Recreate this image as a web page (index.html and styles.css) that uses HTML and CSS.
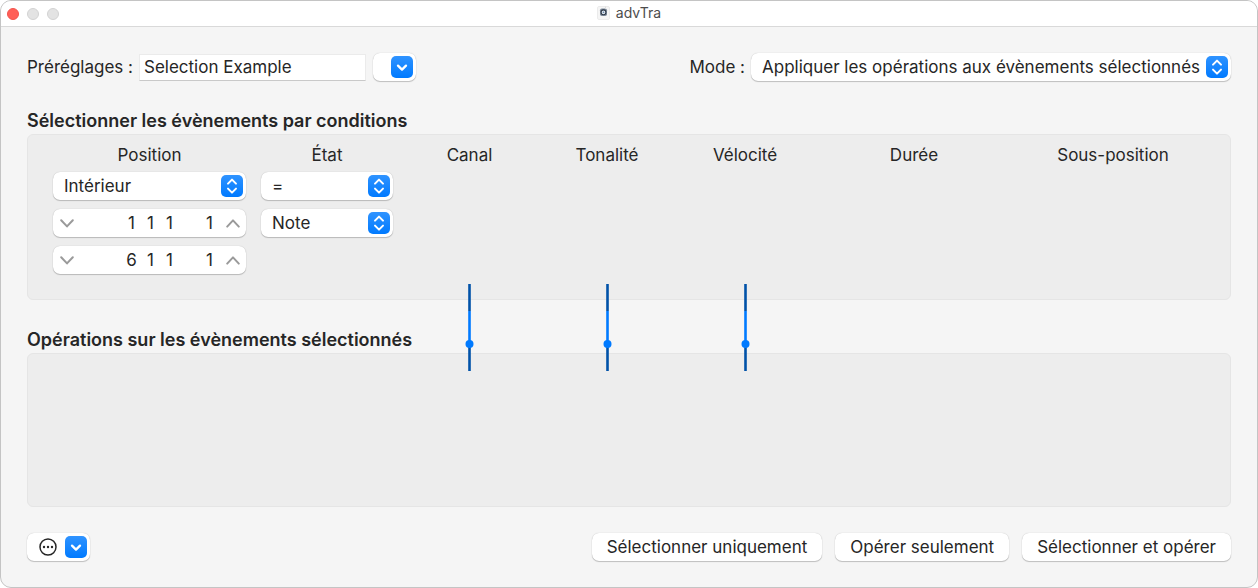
FILE: index.html
```html
<!DOCTYPE html>
<html lang="fr">
<head>
    <meta charset="UTF-8">
    <meta name="viewport" content="width=device-width, initial-scale=1.0">
    <title>advTra</title>
    <link rel="stylesheet" href="styles.css">
</head>
<body>
    <svg width="0" height="0" class="symbols" aria-hidden="true">
        <linearGradient id="blue" x1="0" y1="0" x2="0" y2="1">
            <stop offset="0" stop-color="#2f93ff"/>
            <stop offset="1" stop-color="#007aff"/>
        </linearGradient>
        <symbol id="updown" viewBox="0 0 22 22">
            <rect width="22" height="22" rx="5" fill="url(#blue)"/>
            <path d="M7 8.6l4-4 4 4M7 13.6l4 4 4-4" fill="none" stroke="#fff" stroke-width="2" stroke-linecap="round" stroke-linejoin="round"/>
        </symbol>
        <symbol id="down" viewBox="0 0 22 22">
            <rect width="22" height="22" rx="5" fill="url(#blue)"/>
            <path d="M7 9.6l4 4 4-4" fill="none" stroke="#fff" stroke-width="2.3" stroke-linecap="round" stroke-linejoin="round"/>
        </symbol>
        <symbol id="step-down" viewBox="0 0 14 9">
            <path d="M1.2 1.2L7 7.4l5.8-6.2" fill="none" stroke="#9a9a9a" stroke-width="2" stroke-linecap="round" stroke-linejoin="round"/>
        </symbol>
        <symbol id="step-up" viewBox="0 0 14 9">
            <path d="M1.2 7.6L7 1.4l5.8 6.2" fill="none" stroke="#9a9a9a" stroke-width="2" stroke-linecap="round" stroke-linejoin="round"/>
        </symbol>
        <symbol id="callout" viewBox="0 0 9 87">
            <path d="M4.5 0v27M4.5 60v27" stroke="#0052a8" stroke-width="2.6"/>
            <path d="M4.5 27v33" stroke="#007aff" stroke-width="2.6"/>
            <circle cx="4.5" cy="60" r="4" fill="#007aff"/>
        </symbol>
    </svg>

    <div class="window">
        <header class="titlebar">
            <div class="lights">
                <span class="light close"></span>
                <span class="light"></span>
                <span class="light"></span>
            </div>
            <div class="title">
                <svg width="13" height="14" viewBox="0 0 13 14" aria-hidden="true">
                    <rect x="0.5" y="0.5" width="12" height="13" rx="1.5" fill="#f5f5f5" stroke="#ebebeb"/>
                    <rect x="3" y="2.5" width="7" height="7.5" rx="1.8" fill="#7f8b9b"/>
                    <circle cx="6.5" cy="6.3" r="2.4" fill="#dde5ee" stroke="#303b4a" stroke-width="1.1"/>
                    <circle cx="6.5" cy="6.3" r="0.8" fill="#5d7ea3"/>
                    <path d="M8.5 0.5v2.5" stroke="#dcdcdc"/>
                </svg>
                <span>advTra</span>
            </div>
        </header>

        <main class="content">
            <div class="toolbar">
                <label for="preset">Préréglages :</label>
                <input type="text" id="preset" class="preset-name" value="Selection Example">
                <div class="popup preset-menu">
                    <select aria-label="Menu des préréglages"><option></option></select>
                    <svg class="badge" aria-hidden="true"><use href="#down"/></svg>
                </div>
                <label for="mode" class="mode-label">Mode :</label>
                <div class="popup mode-menu">
                    <select id="mode"><option>Appliquer les opérations aux évènements sélectionnés</option></select>
                    <svg class="badge" aria-hidden="true"><use href="#updown"/></svg>
                </div>
            </div>

            <h2>Sélectionner les évènements par conditions</h2>
            <section class="panel conditions">
                <div class="columns">
                    <div class="column">
                        <h3>Position</h3>
                        <div class="popup">
                            <select aria-label="Position"><option>Intérieur</option></select>
                            <svg class="badge" aria-hidden="true"><use href="#updown"/></svg>
                        </div>
                        <div class="stepper">
                            <button type="button" aria-label="Diminuer"><svg width="14" height="9"><use href="#step-down"/></svg></button>
                            <div class="digits">
                                <input type="text" value="1" aria-label="Début, mesure">
                                <input type="text" value="1" aria-label="Début, temps">
                                <input type="text" value="1" aria-label="Début, division">
                                <input type="text" value="1" aria-label="Début, tic" class="tick">
                            </div>
                            <button type="button" aria-label="Augmenter"><svg width="14" height="9"><use href="#step-up"/></svg></button>
                        </div>
                        <div class="stepper">
                            <button type="button" aria-label="Diminuer"><svg width="14" height="9"><use href="#step-down"/></svg></button>
                            <div class="digits">
                                <input type="text" value="6" aria-label="Fin, mesure">
                                <input type="text" value="1" aria-label="Fin, temps">
                                <input type="text" value="1" aria-label="Fin, division">
                                <input type="text" value="1" aria-label="Fin, tic" class="tick">
                            </div>
                            <button type="button" aria-label="Augmenter"><svg width="14" height="9"><use href="#step-up"/></svg></button>
                        </div>
                    </div>
                    <div class="column">
                        <h3>État</h3>
                        <div class="popup">
                            <select aria-label="Condition d’état"><option>=</option></select>
                            <svg class="badge" aria-hidden="true"><use href="#updown"/></svg>
                        </div>
                        <div class="popup">
                            <select aria-label="Type d’évènement"><option>Note</option></select>
                            <svg class="badge" aria-hidden="true"><use href="#updown"/></svg>
                        </div>
                    </div>
                    <div class="column"><h3>Canal</h3></div>
                    <div class="column"><h3>Tonalité</h3></div>
                    <div class="column"><h3>Vélocité</h3></div>
                    <div class="column"><h3>Durée</h3></div>
                    <div class="column"><h3>Sous-position</h3></div>
                </div>
                <!-- lines from the three middle columns down to the operations -->
                <div class="columns callouts" aria-hidden="true">
                    <svg class="callout canal"><use href="#callout"/></svg>
                    <svg class="callout"><use href="#callout"/></svg>
                    <svg class="callout"><use href="#callout"/></svg>
                </div>
            </section>

            <h2>Opérations sur les évènements sélectionnés</h2>
            <section class="panel operations"></section>

            <footer class="actions">
                <button type="button" class="push more" aria-label="Autres actions">
                    <svg width="18" height="18" viewBox="0 0 18 18" aria-hidden="true">
                        <circle cx="9" cy="9" r="8" fill="none" stroke="#262626" stroke-width="1.5"/>
                        <circle cx="5" cy="9" r="1.2" fill="#262626"/>
                        <circle cx="9" cy="9" r="1.2" fill="#262626"/>
                        <circle cx="13" cy="9" r="1.2" fill="#262626"/>
                    </svg>
                    <svg width="22" height="22" aria-hidden="true"><use href="#down"/></svg>
                </button>
                <button type="button" class="push">Sélectionner uniquement</button>
                <button type="button" class="push">Opérer seulement</button>
                <button type="button" class="push">Sélectionner et opérer</button>
            </footer>
        </main>
    </div>
</body>
</html>
```
FILE: styles.css
```css
* {
    box-sizing: border-box;
}

body {
    margin: 0;
    background-color: #fff;
    color: #262626;
    font-family: Inter, "Liberation Sans", sans-serif;
    font-size: 17px;
    line-height: 24px;
}

input, select, button {
    font: inherit;
    color: inherit;
    margin: 0;
    padding: 0;
    border: 0;
    background: none;
}

.symbols {
    position: absolute;
}

.window {
    display: flex;
    flex-direction: column;
    min-height: 100vh;
    border: 1px solid #c4c4c4;
    border-radius: 11px;
    background-color: #f5f5f5;
    overflow: hidden;
}

.titlebar {
    display: grid;
    grid-template-columns: 1fr auto 1fr;
    align-items: center;
    height: 26px;
    padding: 0 6px;
    background-color: #fff;
    border-bottom: 1px solid #d9d9d9;
}

.lights {
    display: flex;
    gap: 8px;
}

.light {
    width: 12px;
    height: 12px;
    border-radius: 50%;
    background-color: #e3e3e3;
    border: 1px solid #d2d2d2;
}

.light.close {
    background-color: #ff5f57;
    border-color: #f2544d;
}

.title {
    display: flex;
    align-items: center;
    gap: 6px;
    padding-bottom: 2px;
    font-size: 14px;
    line-height: 22px;
    color: #4d4d4d;
}

.content {
    flex: 1;
    display: flex;
    flex-direction: column;
    padding: 26px;
}

.toolbar {
    display: flex;
    align-items: center;
}

.preset-name {
    width: 227px;
    height: 27px;
    margin: 0 7px 0 6px;
    padding: 0 4px;
    background-color: #fff;
    border: 1px solid #ebebeb;
    border-bottom-color: #c9c9c9;
}

.mode-label {
    margin: 0 6px 0 auto;
}

.popup {
    position: relative;
    height: 28px;
}

.popup select {
    appearance: none;
    width: 100%;
    padding-left: 11px;
}

.popup select, .stepper, .push {
    height: 28px;
    background-color: #fff;
    border-radius: 7px;
    box-shadow: 0 0 1px rgba(0, 0, 0, 0.25), 0 1px 1px rgba(0, 0, 0, 0.2);
}

.badge {
    position: absolute;
    top: 3px;
    right: 3px;
    width: 22px;
    height: 22px;
    pointer-events: none;
}

.preset-menu {
    width: 43px;
}

.mode-menu {
    width: 480px;
}

h2 {
    margin: 28px 0 1px;
    font-size: 18px;
    font-weight: 600;
    line-height: 24px;
}

h3 {
    margin: 0 0 -4px;
    font-size: 17px;
    font-weight: 400;
    line-height: 24px;
    text-align: center;
}

.panel {
    background-color: #ededed;
    border: 1px solid #e5e5e5;
    border-radius: 6px;
}

.conditions {
    position: relative;
    padding: 8px 25px 25px;
}

.columns {
    display: grid;
    grid-template-columns: 193fr 132fr 123fr 122fr 124fr 184fr 184fr;
    column-gap: 15px;
}

.column {
    display: flex;
    flex-direction: column;
    gap: 9px;
    min-width: 0;
}

.stepper {
    display: flex;
    justify-content: space-between;
}

.stepper button {
    display: flex;
    align-items: center;
    justify-content: center;
    width: 27px;
}

.digits {
    display: flex;
    margin-left: auto;
}

.digits input {
    width: 19px;
    text-align: center;
}

.digits .tick {
    margin-left: 21px;
}

.callouts {
    position: absolute;
    top: 149px;
    left: 25px;
    right: 25px;
    pointer-events: none;
}

.callout {
    width: 9px;
    height: 87px;
    justify-self: center;
}

.canal {
    grid-column: 3;
}

.operations {
    flex: 1;
    min-height: 60px;
}

.actions {
    display: flex;
    gap: 13px;
    margin-top: 26px;
}

.push {
    padding: 0 15px;
}

.more {
    display: flex;
    align-items: center;
    justify-content: space-between;
    width: 63px;
    margin-right: auto;
    padding: 0 3px 0 12px;
}
```
